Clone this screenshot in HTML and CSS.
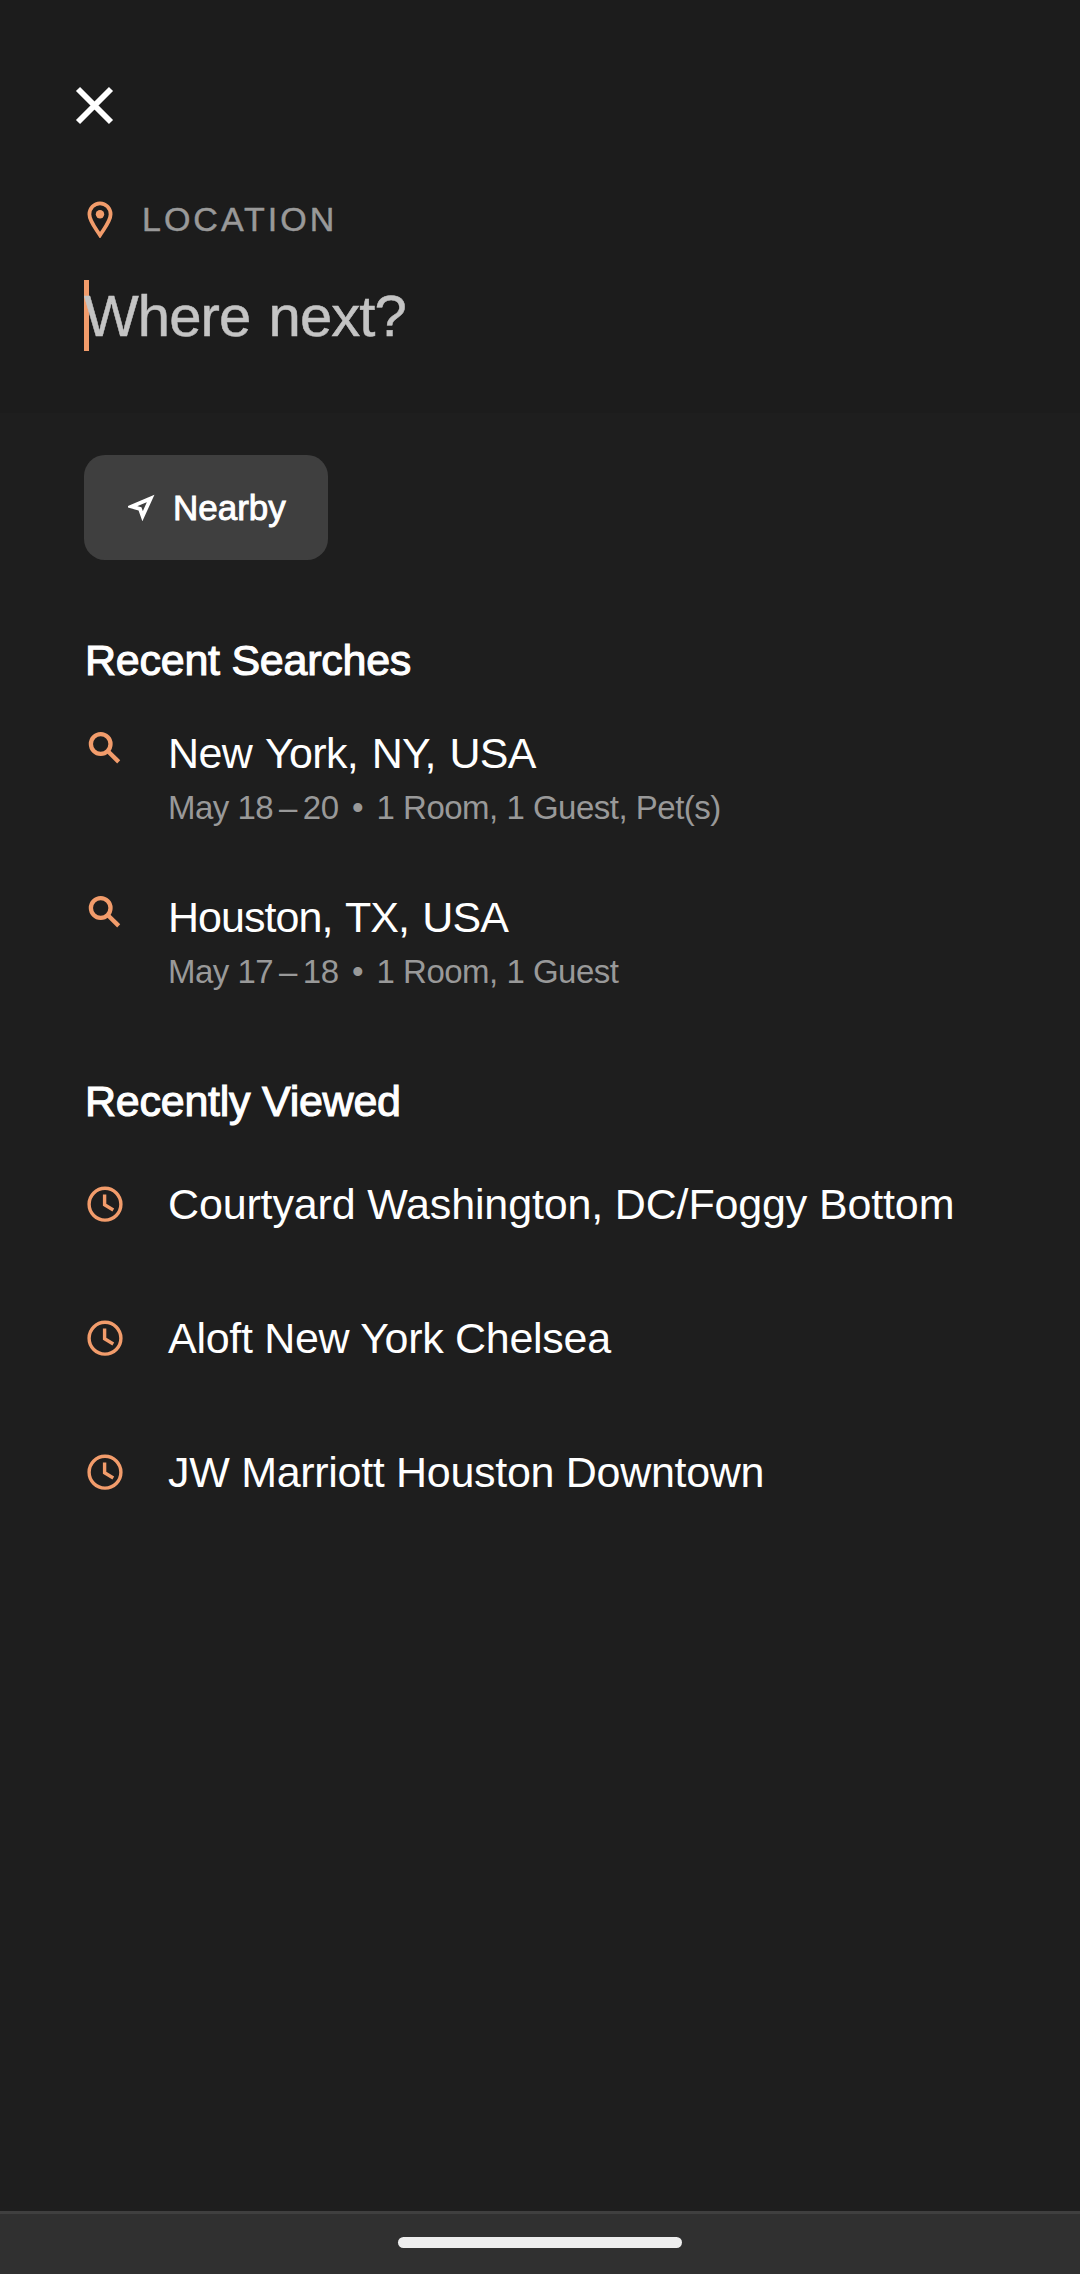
FILE: index.html
```html
<!DOCTYPE html>
<html lang="en">
<head>
<meta charset="utf-8">
<title>Location search</title>
<link rel="stylesheet" href="styles.css">
</head>
<body>
<header class="search-header">
  <svg class="close" viewBox="0 0 37 37"><path d="M2 2 35 35M35 2 2 35"/></svg>
  <div class="label-row">
    <svg class="pin" viewBox="0 0 26 37"><path d="M13 34.2C8 26.5 2.4 20 2.4 13.3A10.6 11 0 0 1 23.6 13.3C23.6 20 18 26.5 13 34.2Z"/><circle cx="13" cy="13.2" r="4.2"/></svg>
    <span class="label">LOCATION</span>
  </div>
  <div class="field"><i class="caret"></i><span class="placeholder">Where next?</span></div>
</header>
<main class="results">
  <button class="nearby"><svg class="arrow" viewBox="0 0 27 27"><path d="M3.6 12.6 22.7 4.4 14.6 22.2 12 14.8Z"/></svg><span>Nearby</span></button>
  <section class="group searches">
    <h2>Recent Searches</h2>
    <ul>
      <li><svg class="icon" viewBox="0 0 42 50"><circle cx="16.7" cy="16" r="9.8"/><path d="M23.7 23 34.7 33.9"/></svg><div><p class="title city">New York, NY, USA</p><p class="detail">May 18<span class="dash"> – </span>20<span class="dot"> • </span>1 Room, 1 Guest, Pet(s)</p></div></li>
      <li><svg class="icon" viewBox="0 0 42 50"><circle cx="16.7" cy="16" r="9.8"/><path d="M23.7 23 34.7 33.9"/></svg><div><p class="title city tight">Houston, TX, USA</p><p class="detail">May 17<span class="dash"> – </span>18<span class="dot"> • </span>1 Room, 1 Guest</p></div></li>
    </ul>
  </section>
  <section class="group viewed">
    <h2>Recently Viewed</h2>
    <ul>
      <li><svg class="icon clock" viewBox="0 0 42 50"><circle cx="21" cy="25.2" r="15.9"/><path d="M20.6 15.5V25.8L29.3 31"/></svg><p class="title wide">Courtyard Washington, DC/Foggy Bottom</p></li>
      <li><svg class="icon clock" viewBox="0 0 42 50"><circle cx="21" cy="25.2" r="15.9"/><path d="M20.6 15.5V25.8L29.3 31"/></svg><p class="title">Aloft New York Chelsea</p></li>
      <li><svg class="icon clock" viewBox="0 0 42 50"><circle cx="21" cy="25.2" r="15.9"/><path d="M20.6 15.5V25.8L29.3 31"/></svg><p class="title">JW Marriott Houston Downtown</p></li>
    </ul>
  </section>
</main>
<footer class="nav-bar"><span class="handle"></span></footer>
</body>
</html>
```
FILE: styles.css
```css
* { box-sizing: border-box; margin: 0; padding: 0; }
body {
  min-height: 2274px;
  display: flex;
  flex-direction: column;
  background: #1e1e1e;
  color: #fff;
  font-family: "Liberation Sans", Arial, sans-serif;
}
svg { display: block; flex: none; fill: none; stroke: #f29c6b; }
.search-header { height: 413px; padding: 86px 84px 0; background: #1c1c1c; }
.close { width: 37px; height: 37px; margin-left: -8px; margin-top: 1px; stroke: #fff; stroke-width: 5.8; overflow: visible; }
.label-row { display: flex; align-items: center; height: 40px; margin-top: 75px; padding-left: 3px; }
.pin { width: 26px; height: 37px; stroke-width: 3.8; }
.pin circle { fill: #f29c6b; stroke: none; }
.label { margin-left: 29px; font-size: 34px; line-height: 40px; letter-spacing: 3px; color: #999; -webkit-text-stroke: 0.5px #999; }
.field { position: relative; margin-top: 42px; font-size: 58px; line-height: 70px; letter-spacing: -0.9px; word-spacing: 3px; color: #c4c4c4; white-space: nowrap; -webkit-text-stroke: 0.5px #c4c4c4; }
.placeholder { position: relative; }
.caret { position: absolute; left: 0; top: -1px; width: 5px; height: 71px; background: #f29c6b; }
.results { flex: 1; padding: 42px 84px 0; }
.nearby {
  display: flex; align-items: center; width: 244px; height: 105px; padding-left: 44px;
  border: 0; border-radius: 21px; background: #3f3f3f; color: #fff; font: 35px/50px "Liberation Sans", Arial, sans-serif;
  -webkit-text-stroke: 0.9px #fff;
}
.arrow { width: 27px; height: 27px; margin-right: 18px; stroke: #fff; stroke-width: 3.8; }
.group h2 { padding-left: 1px; font-size: 43px; font-weight: 400; line-height: 50px; letter-spacing: -0.25px; -webkit-text-stroke: 1.1px #fff; }
.searches { margin-top: 75px; }
.viewed { margin-top: 84px; }
.group ul { display: flex; flex-direction: column; list-style: none; }
.searches ul { gap: 64px; margin-top: 43px; }
.viewed ul { gap: 84px; margin-top: 53px; }
.group li { display: flex; align-items: flex-start; gap: 42px; }
.icon { width: 42px; height: 50px; stroke-width: 4.3; }
.clock { stroke-width: 3.4; }
.title { font-size: 43px; line-height: 50px; letter-spacing: -0.3px; white-space: nowrap; }
.title.city { letter-spacing: -0.65px; word-spacing: 2.3px; }
.title.city.tight { letter-spacing: -0.95px; }
.title.wide { letter-spacing: -0.15px; }
.detail { margin-top: 10px; font-size: 33px; line-height: 40px; letter-spacing: -0.5px; color: #999; white-space: nowrap; }
.dash { word-spacing: -2.8px; }
.dot { word-spacing: 4.8px; }
.nav-bar { height: 63px; padding-top: 23px; border-top: 3px solid #3f3f3f; background: #303030; }
.handle { display: block; width: 284px; height: 11px; margin: 0 auto; border-radius: 6px; background: #eee; }
```
